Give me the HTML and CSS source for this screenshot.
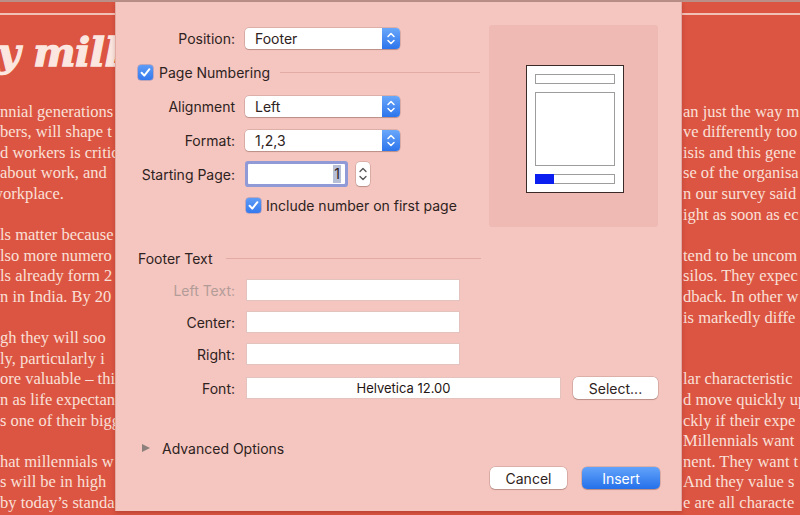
FILE: index.html
```html
<!DOCTYPE html>
<html lang="en">
<head>
    <meta charset="UTF-8">
    <title>Page Number</title>
    <link rel="stylesheet" href="styles.css">
</head>
<body>
    <div class="page">
        <div class="topbar"></div>
        <div class="rule"></div>

        <div class="article">
            <div class="col col-left">
                <h1 class="headline">y mill</h1>
                <div class="lines">
                    <p>nnial generations</p>
                    <p>bers, will shape t</p>
                    <p>d workers is critic</p>
                    <p>about work, and</p>
                    <p class="shift">workplace.</p>
                    <p></p>
                    <p>ls matter because</p>
                    <p>lso more numero</p>
                    <p>ls already form 2</p>
                    <p>n in India. By 20</p>
                    <p></p>
                    <p>gh they will soo</p>
                    <p>ly, particularly i</p>
                    <p>ore valuable – thi</p>
                    <p>n as life expectan</p>
                    <p>s one of their bigg</p>
                    <p></p>
                    <p>hat millennials w</p>
                    <p>s will be in high</p>
                    <p>by today’s standa</p>
                    <p>e organisation</p>
                </div>
            </div>
            <div class="col col-mid">
                <div class="lines">
                    <p class="last">rds, millennials are more likely to leave their roles than</p>
                </div>
            </div>
            <div class="col col-right">
                <div class="lines">
                    <p>an just the way m</p>
                    <p>ve differently too</p>
                    <p>isis and this gene</p>
                    <p>se of the organisa</p>
                    <p>n our survey said</p>
                    <p>ight as soon as ec</p>
                    <p></p>
                    <p>tend to be uncom</p>
                    <p>silos. They expec</p>
                    <p>dback. In other w</p>
                    <p>is markedly diffe</p>
                    <p></p>
                    <p></p>
                    <p>lar characteristic</p>
                    <p>d move quickly up</p>
                    <p>ckly if their expe</p>
                    <p>Millennials want</p>
                    <p>nent. They want t</p>
                    <p>And they value s</p>
                    <p>e are all characte</p>
                    <p>ristics of the</p>
                </div>
            </div>
        </div>

        <div class="sheet">
            <div class="top">
                <div class="form">
                    <div class="row">
                        <span class="label">Position:</span>
                        <div class="popup">
                            <span class="popup-value">Footer</span>
                            <span class="popup-arrows">
                                <svg width="18" height="21" viewBox="0 0 18 21"><path d="M6 8.5 L9 5.5 L12 8.5 M6 12.5 L9 15.5 L12 12.5" fill="none" stroke="#fff" stroke-width="1.5" stroke-linecap="round" stroke-linejoin="round"/></svg>
                            </span>
                        </div>
                    </div>

                    <div class="row row-check">
                        <span class="checkbox">
                            <svg width="15" height="15" viewBox="0 0 15 15"><path d="M3.6 7.8 L6.3 10.6 L11.4 4.2" fill="none" stroke="#fff" stroke-width="2" stroke-linecap="round" stroke-linejoin="round"/></svg>
                        </span>
                        <span class="check-text">Page Numbering</span>
                        <span class="sep"></span>
                    </div>

                    <div class="row">
                        <span class="label">Alignment</span>
                        <div class="popup">
                            <span class="popup-value">Left</span>
                            <span class="popup-arrows">
                                <svg width="18" height="21" viewBox="0 0 18 21"><path d="M6 8.5 L9 5.5 L12 8.5 M6 12.5 L9 15.5 L12 12.5" fill="none" stroke="#fff" stroke-width="1.5" stroke-linecap="round" stroke-linejoin="round"/></svg>
                            </span>
                        </div>
                    </div>

                    <div class="row">
                        <span class="label">Format:</span>
                        <div class="popup">
                            <span class="popup-value">1,2,3</span>
                            <span class="popup-arrows">
                                <svg width="18" height="21" viewBox="0 0 18 21"><path d="M6 8.5 L9 5.5 L12 8.5 M6 12.5 L9 15.5 L12 12.5" fill="none" stroke="#fff" stroke-width="1.5" stroke-linecap="round" stroke-linejoin="round"/></svg>
                            </span>
                        </div>
                    </div>

                    <div class="row">
                        <span class="label">Starting Page:</span>
                        <div class="number">
                            <div class="num-field"><span class="selected">1</span></div>
                            <span class="stepper">
                                <svg width="14" height="24" viewBox="0 0 14 24"><path d="M4 9.5 L7 6.5 L10 9.5 M4 14.5 L7 17.5 L10 14.5" fill="none" stroke="#555" stroke-width="1.3" stroke-linecap="round" stroke-linejoin="round"/></svg>
                            </span>
                        </div>
                    </div>

                    <div class="row row-include">
                        <span></span>
                        <div class="include">
                            <span class="checkbox">
                                <svg width="15" height="15" viewBox="0 0 15 15"><path d="M3.6 7.8 L6.3 10.6 L11.4 4.2" fill="none" stroke="#fff" stroke-width="2" stroke-linecap="round" stroke-linejoin="round"/></svg>
                            </span>
                            <span class="check-text">Include number on first page</span>
                        </div>
                    </div>
                </div>

                <div class="preview">
                    <div class="sheet-page">
                        <div class="pv-bar"></div>
                        <div class="pv-body"></div>
                        <div class="pv-bar"><span class="pv-num"></span></div>
                    </div>
                </div>
            </div>

            <div class="lower">
                <div class="group-head">
                    <span>Footer Text</span>
                    <span class="sep"></span>
                </div>

                <div class="frow">
                    <span class="label disabled">Left Text:</span>
                    <div class="field"></div>
                </div>
                <div class="frow">
                    <span class="label">Center:</span>
                    <div class="field"></div>
                </div>
                <div class="frow">
                    <span class="label">Right:</span>
                    <div class="field"></div>
                </div>
                <div class="frow frow-font">
                    <span class="label">Font:</span>
                    <div class="field field-font">Helvetica 12.00</div>
                    <button class="btn btn-select">Select...</button>
                </div>

                <div class="advanced">
                    <span class="disclosure"></span>
                    <span>Advanced Options</span>
                </div>

                <div class="actions">
                    <button class="btn">Cancel</button>
                    <button class="btn btn-primary">Insert</button>
                </div>
            </div>
        </div>
    </div>
</body>
</html>
```

FILE: styles.css
```css
* {
    box-sizing: border-box;
    margin: 0;
    padding: 0;
}

body {
    width: 800px;
    height: 515px;
    overflow: hidden;
    background-color: #dc5442;
    font-family: Inter, 'Liberation Sans', sans-serif;
}

.page {
    position: relative;
    height: 515px;
}

.topbar {
    height: 2px;
    background-color: #b98f88;
}

.rule {
    margin-top: 11px;
    height: 2px;
    background-color: #f2c1b6;
}

/* article behind the sheet */

.article {
    display: grid;
    grid-template-columns: 115px 568px 117px;
    font-family: 'Liberation Serif', serif;
    color: #f9e0d8;
}

.col {
    overflow: hidden;
    white-space: nowrap;
}

.headline {
    margin: 12px 0 24.7px -3px;
    height: 50px;
    line-height: 50px;
    font-family: 'DejaVu Serif', serif;
    font-size: 40px;
    font-style: italic;
    font-weight: 700;
    letter-spacing: -0.5px;
    color: #fbe6e0;
    -webkit-text-stroke: 1.3px #fbe6e0;
}

.lines p {
    height: 20.6px;
    line-height: 20.6px;
    font-size: 16.5px;
}

.lines .shift {
    margin-left: -9px;
}

.col-mid {
    padding-top: 498.7px;
    padding-left: 20px;
}

.col-right {
    padding-top: 86.7px;
}

/* the sheet */

.sheet {
    position: absolute;
    left: 115px;
    top: 2px;
    width: 567px;
    height: 509px;
    padding: 19px 23px 0 22px;
    background-color: #f5c6c0;
    border-left: 1px solid #e2aaa2;
    border-right: 1px solid #e2aaa2;
    box-shadow: 0 2px 4px rgba(90, 20, 10, 0.25);
    color: #2e2220;
    font-size: 14px;
}

.top {
    display: flex;
    gap: 9px;
    height: 221px;
}

.form {
    width: 343px;
}

.row {
    display: grid;
    grid-template-columns: 97px auto;
    column-gap: 10px;
    align-items: center;
    height: 34px;
}

.label {
    text-align: right;
}

.label.disabled {
    color: #b39c98;
}

.popup {
    display: flex;
    width: 155px;
    height: 21px;
    border-radius: 4px;
    background-color: white;
    box-shadow: 0 0 0 0.5px rgba(60, 20, 10, 0.25), 0 1px 1px rgba(60, 20, 10, 0.2);
}

.popup-value {
    flex: 1;
    padding-left: 10px;
    line-height: 21px;
}

.popup-arrows {
    width: 18px;
    height: 21px;
    border-radius: 0 4px 4px 0;
    background: linear-gradient(to bottom, #6aa8fa, #2c74ec);
}

.popup-arrows svg {
    display: block;
}

.row-check {
    display: flex;
    align-items: center;
    column-gap: 0;
}

.checkbox {
    width: 15px;
    height: 15px;
    border-radius: 3px;
    background: linear-gradient(to bottom, #5e9cf7, #3479ee);
    box-shadow: 0 0 0 0.5px rgba(40, 70, 160, 0.5);
}

.checkbox svg {
    display: block;
}

.check-text {
    margin-left: 6px;
}

.sep {
    flex: 1;
    height: 1px;
    margin-left: 10px;
    background-color: #e2aca5;
}

.number {
    display: flex;
    align-items: center;
}

.num-field {
    width: 97px;
    height: 20px;
    margin-left: 3px;
    background-color: white;
    box-shadow: 0 0 0 3px #8f9ad6;
    border-radius: 1px;
    text-align: right;
    padding-right: 4px;
}

.selected {
    display: inline-block;
    height: 18px;
    margin-top: 1px;
    padding: 0 1px;
    line-height: 18px;
    background-color: #b7bfd6;
}

.stepper {
    margin-left: 11px;
    width: 14px;
    height: 24px;
    border-radius: 4px;
    background-color: white;
    box-shadow: 0 0 0 0.5px rgba(60, 20, 10, 0.25), 0 1px 1px rgba(60, 20, 10, 0.2);
}

.stepper svg {
    display: block;
}

.row-include {
    height: 28px;
}

.include {
    display: flex;
    align-items: center;
    margin-left: 1px;
}

.include .check-text {
    margin-left: 5px;
}

.preview {
    width: 170px;
    height: 202px;
    margin-top: 4px;
    background-color: #efbab3;
    border-radius: 3px;
    display: flex;
    justify-content: center;
    align-items: center;
}

.sheet-page {
    width: 98px;
    height: 128px;
    margin: 6px 0 0 4px;
    padding: 8px 8px 0 8px;
    background-color: white;
    border: 1px solid #3a2b28;
    display: flex;
    flex-direction: column;
    gap: 8px;
}

.pv-bar {
    height: 10px;
    border: 1px solid #9d9d9d;
    display: flex;
}

.pv-body {
    height: 74px;
    border: 1px solid #9d9d9d;
}

.pv-num {
    width: 19px;
    margin: -1px 0 -1px -1px;
    background-color: #0a1ff0;
}

/* footer text group */

.lower {
    width: 522px;
}

.group-head {
    display: flex;
    align-items: center;
    height: 32px;
    width: 343px;
}

.group-head .sep {
    margin-left: 13px;
}

.frow {
    display: grid;
    grid-template-columns: 97px 214px;
    column-gap: 11px;
    align-items: center;
    height: 32px;
}

.field {
    height: 22px;
    background-color: white;
    border: 1px solid #e4c3be;
}

.frow-font {
    grid-template-columns: 97px 315px 86px;
    height: 36px;
}

.field-font {
    text-align: center;
    line-height: 20px;
    font-size: 13px;
    color: #1f1614;
}

.btn {
    height: 22px;
    border: none;
    border-radius: 5px;
    background-color: white;
    box-shadow: 0 0 0 0.5px rgba(60, 20, 10, 0.25), 0 1px 1px rgba(60, 20, 10, 0.2);
    font-family: Inter, 'Liberation Sans', sans-serif;
    font-size: 14px;
    color: #2e2220;
}

.btn-select {
    margin-left: 1px;
}

.advanced {
    display: flex;
    align-items: center;
    height: 24px;
    margin-top: 30px;
    padding-left: 4px;
}

.disclosure {
    width: 0;
    height: 0;
    border-top: 4.5px solid transparent;
    border-bottom: 4.5px solid transparent;
    border-left: 8px solid #8c7f7c;
    margin-right: 12px;
}

.actions {
    display: flex;
    justify-content: flex-end;
    gap: 15px;
    margin-top: 7px;
}

.actions .btn {
    width: 77px;
}

.actions .btn-primary {
    width: 78px;
    background: linear-gradient(to bottom, #62a3fa, #2570ea);
    color: white;
}
```
